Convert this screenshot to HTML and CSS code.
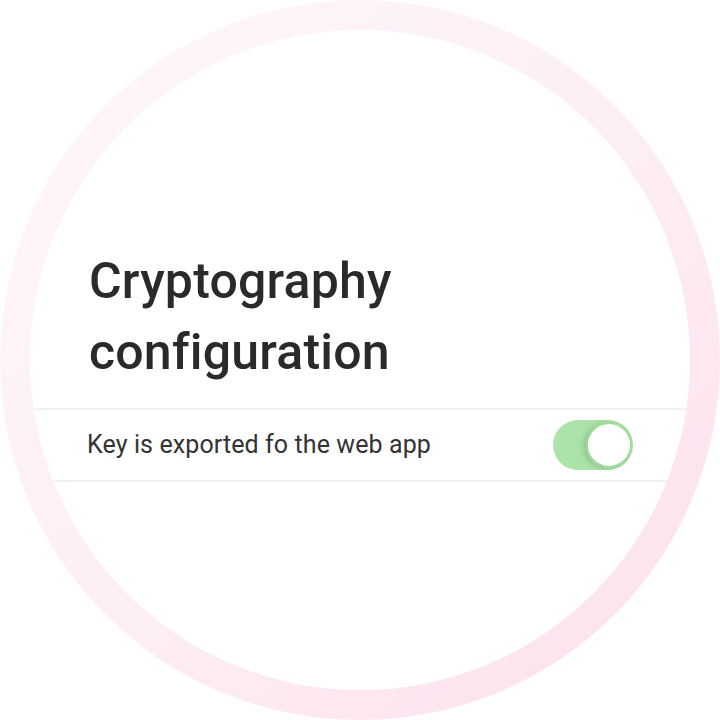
FILE: index.html
```html
<!DOCTYPE html>
<html>
<head>
<meta charset="utf-8">
<link rel="stylesheet" href="styles.css">
</head>
<body>
<div class="ring">
  <div class="disc">
    <h1 class="title">Cryptography<br>configuration</h1>
    <div class="row">
      <span class="label">Key is exported fo the web app</span>
      <span class="toggle"><span class="knob"></span></span>
    </div>
  </div>
</div>
</body>
</html>
```
FILE: styles.css
```css
html, body {
  margin: 0;
  padding: 0;
  background: #ffffff;
}
body {
  width: 720px;
  height: 720px;
  overflow: hidden;
  font-family: Roboto, "Noto Sans", sans-serif;
}
.ring {
  width: 720px;
  height: 720px;
  box-sizing: border-box;
  padding: 30px;
  border-radius: 50%;
  background: linear-gradient(135deg, #fef8fb 0%, #fdeef5 50%, #fde0ed 100%);
}
.disc {
  width: 660px;
  height: 660px;
  border-radius: 50%;
  background: #ffffff;
  overflow: hidden;
  box-sizing: border-box;
  padding-top: 216px;
}
.title {
  margin: 0 0 20px 59px;
  font-size: 50px;
  line-height: 71px;
  font-weight: 500;
  color: #2a2a2a;
  letter-spacing: 0.2px;
}
.row {
  display: flex;
  align-items: center;
  justify-content: space-between;
  height: 70px;
  border-top: 2px solid #f2f2f2;
  border-bottom: 2px solid #f2f2f2;
  padding: 0 57px;
}
.label {
  font-size: 25px;
  letter-spacing: 0.1px;
  color: #333333;
  margin-top: -1px;
}
.toggle {
  position: relative;
  width: 80px;
  height: 50px;
  border-radius: 25px;
  background: linear-gradient(90deg, #ade3aa, #a6e0a4);
}
.knob {
  position: absolute;
  right: 1px;
  top: 2px;
  width: 42px;
  height: 42px;
  border-radius: 50%;
  background: #ffffff;
  border: 2px solid #9edb9c;
  box-shadow: -3px 1px 5px rgba(0, 0, 0, 0.12);
}
```
